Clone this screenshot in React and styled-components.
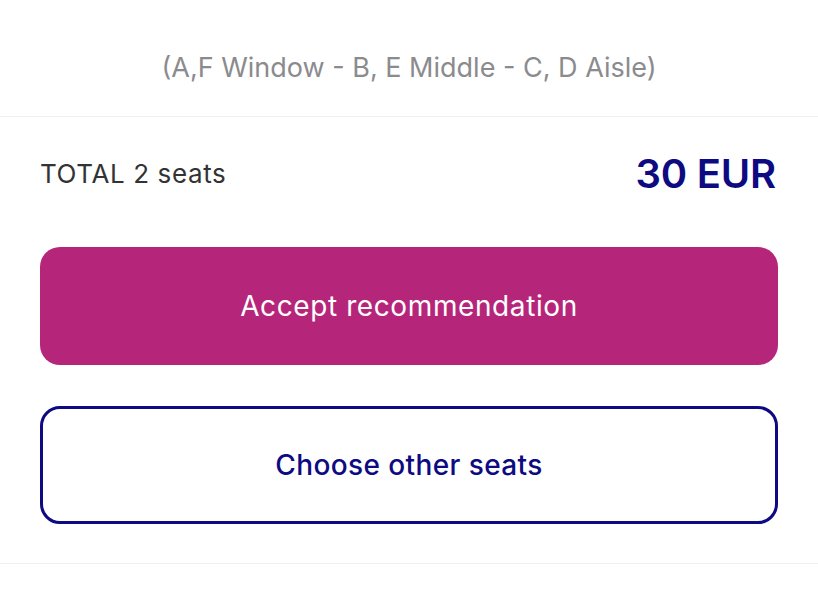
import React from 'react'
import styled, { createGlobalStyle } from 'styled-components'

const GlobalStyle = createGlobalStyle`
  html, body {
    margin: 0;
    padding: 0;
    background: #ffffff;
  }
  body {
    font-family: Inter, "Noto Sans", "Liberation Sans", sans-serif;
    -webkit-font-smoothing: antialiased;
  }
`

const Page = styled.div`
  width: 818px;
  height: 600px;
  background: #ffffff;
  overflow: hidden;
`

const Legend = styled.div`
  height: 117px;
  box-sizing: border-box;
  padding-top: 51px;
  text-align: center;
  font-size: 27px;
  letter-spacing: 0;
  color: #8b8b8e;
  border-bottom: 1px solid #efeff1;
`

const Body = styled.div`
  display: flex;
  flex-direction: column;
  padding: 0 40px 39px 40px;
  border-bottom: 1px solid #efeff1;
`

const TotalRow = styled.div`
  display: flex;
  justify-content: space-between;
  align-items: center;
  height: 113px;
  padding-right: 2px;
  margin-bottom: 17px;
`

const TotalLabel = styled.span`
  font-size: 26px;
  color: #333333;
  letter-spacing: 0.6px;
`

const Price = styled.span`
  font-size: 40px;
  font-weight: 600;
  color: #0d0a82;
  letter-spacing: -0.2px;
`

const Actions = styled.div`
  display: flex;
  flex-direction: column;
  gap: 41px;
`

const Button = styled.button`
  display: flex;
  align-items: center;
  justify-content: center;
  width: 738px;
  height: 118px;
  box-sizing: border-box;
  border-radius: 20px;
  font-family: inherit;
  font-size: 28px;
  letter-spacing: ${(p) => (p.primary ? '0.6px' : '0.4px')};
  cursor: pointer;
  background: ${(p) => (p.primary ? '#b5267a' : '#ffffff')};
  color: ${(p) => (p.primary ? '#ffffff' : '#0d0a82')};
  border: ${(p) => (p.primary ? 'none' : '3px solid #0d0a82')};
  font-weight: ${(p) => (p.primary ? 400 : 500)};
`

export default function App() {
  return (
    <Page>
      <GlobalStyle />
      <Legend>(A,F Window - B, E Middle - C, D Aisle)</Legend>
      <Body>
        <TotalRow>
          <TotalLabel>TOTAL 2 seats</TotalLabel>
          <Price>30 EUR</Price>
        </TotalRow>
        <Actions>
          <Button primary>Accept recommendation</Button>
          <Button>Choose other seats</Button>
        </Actions>
      </Body>
    </Page>
  )
}
